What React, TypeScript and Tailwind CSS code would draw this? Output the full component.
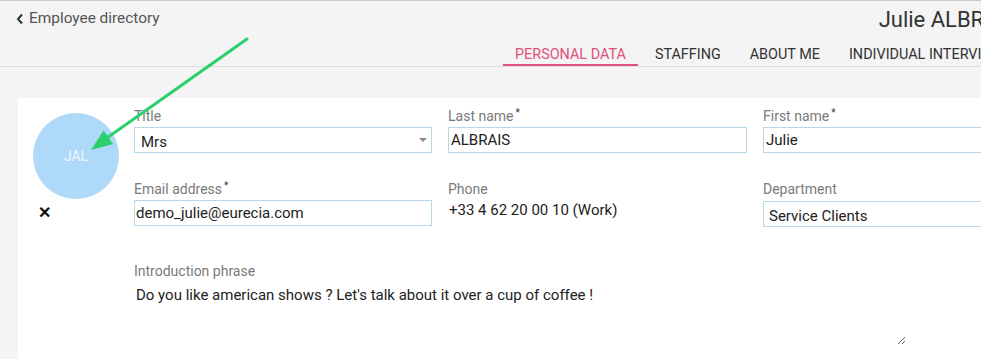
import React from "react";

const FONT = { fontFamily: "Roboto, 'Liberation Sans', sans-serif" };

function Label({ text, required }: { text: string; required?: boolean }) {
  return (
    <div className="h-[21px] text-[14px] leading-[20px] text-[#7a7a7a] whitespace-nowrap">
      {text}
      {required && <sup className="ml-[2px] text-[10px] text-[#333]">*</sup>}
    </div>
  );
}

function TextBox({ value, className }: { value: string; className: string }) {
  return (
    <div
      className={`h-[26px] border border-[#b5d9e9] bg-white text-[15px] text-[#222] whitespace-nowrap ${className}`}
    >
      {value}
    </div>
  );
}

export default function App() {
  const tabs = ["PERSONAL DATA", "STAFFING", "ABOUT ME", "INDIVIDUAL INTERVIEWS"];

  return (
    <div
      className="relative h-[359px] w-full overflow-hidden border-t border-[#c8c8c8] bg-[#f4f4f4]"
      style={FONT}
    >
      {/* Header */}
      <div className="flex h-[66px] flex-col border-b border-[#dcdcdc]">
        <div className="flex h-[36px] items-center whitespace-nowrap">
          <div className="ml-[16px] flex items-center gap-[5px] text-[15.4px] text-[#555]">
            <svg width="8" height="12" viewBox="0 0 8 12">
              <path d="M6 1.5 L2 6 L6 10.5" fill="none" stroke="#333" strokeWidth="2" />
            </svg>
            Employee directory
          </div>
          <div className="ml-[719px] shrink-0 text-[22px] text-[#333]">Julie ALBRAIS</div>
        </div>
        <div className="ml-[503px] flex h-[29px] gap-[5px] whitespace-nowrap">
          {tabs.map((t, i) => (
            <div
              key={t}
              className={
                i === 0
                  ? "border-b-2 border-[#e0527a] px-[12px] pt-[8px] text-[14.4px] leading-[19px] text-[#e0527a]"
                  : "px-[12px] pt-[8px] text-[14.4px] leading-[19px] text-[#333]"
              }
            >
              {t}
            </div>
          ))}
        </div>
      </div>

      {/* Card */}
      <div className="ml-[18px] mt-[31px] flex h-[300px] bg-white">
        {/* Avatar */}
        <div className="flex w-[116px] shrink-0 flex-col pl-[15px] pt-[15px]">
          <div className="flex h-[86px] w-[86px] items-center justify-center rounded-full bg-[#aed9f8] text-[14px] text-[#eef7fe]">
            JAL
          </div>
          <div className="ml-[5px] mt-[6px] text-[16px] font-bold leading-[16px] text-[#111]">✕</div>
        </div>

        {/* Form */}
        <div className="shrink-0 pt-[8px]">
          <div className="grid grid-cols-[298px_299px_299px] gap-x-[16px] gap-y-[26px]">
            <div>
              <Label text="Title" />
              <div className="relative">
                <TextBox value="Mrs" className="px-[6px] leading-[28px]" />
                <div className="absolute right-[5px] top-[11px] h-0 w-0 border-x-[4px] border-t-[4px] border-x-transparent border-t-[#888]" />
              </div>
            </div>
            <div>
              <Label text="Last name" required />
              <TextBox value="ALBRAIS" className="px-[2px] leading-[24px]" />
            </div>
            <div>
              <Label text="First name" required />
              <TextBox value="Julie" className="px-[2px] leading-[24px]" />
            </div>

            <div>
              <Label text="Email address" required />
              <TextBox value="demo_julie@eurecia.com" className="px-[1px] leading-[24px]" />
            </div>
            <div>
              <Label text="Phone" />
              <div className="h-[26px] pl-[1px] text-[15px] leading-[20px] text-[#222]">
                +33 4 62 20 00 10 (Work)
              </div>
            </div>
            <div>
              <Label text="Department" />
              <TextBox value="Service Clients" className="mt-[1px] px-[5px] leading-[28px]" />
            </div>
          </div>

          <div className="mt-[34px]">
            <Label text="Introduction phrase" />
            <textarea
              className="mt-[3px] block h-[60px] w-[772px] resize-y border-0 bg-white px-[2px] py-0 text-[15px] leading-[20px] text-[#222] outline-none"
              style={FONT}
              defaultValue="Do you like american shows ? Let's talk about it over a cup of coffee !"
            />
          </div>
        </div>
      </div>

      {/* Annotation arrow */}
      <svg className="pointer-events-none absolute left-0 top-0" width="981" height="359">
        <line x1="247" y1="38" x2="104" y2="139" stroke="#2bcf6b" strokeWidth="3" strokeLinecap="round" />
        <polygon points="91,149 103.5,129.5 113,143" fill="#2bcf6b" />
      </svg>
    </div>
  );
}
